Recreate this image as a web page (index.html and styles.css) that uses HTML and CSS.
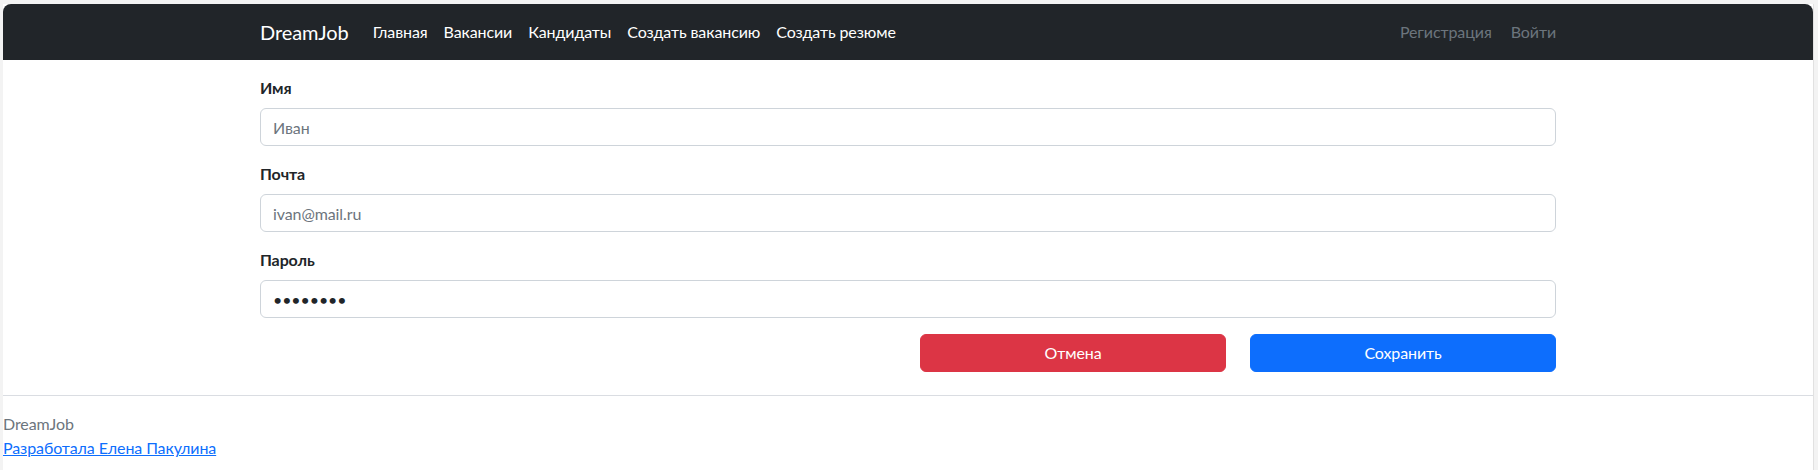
FILE: index.html
```html
<!DOCTYPE html>
<html lang="ru">
<head>
<meta charset="utf-8">
<title>DreamJob — Регистрация</title>
<link rel="stylesheet" href="styles.css">
</head>
<body>
<div class="page">
  <nav class="navbar">
    <div class="container nav-inner">
      <a class="brand" href="#">DreamJob</a>
      <ul class="nav-left">
        <li><a class="nav-link" href="#">Главная</a></li>
        <li><a class="nav-link" href="#">Вакансии</a></li>
        <li><a class="nav-link" href="#">Кандидаты</a></li>
        <li><a class="nav-link" href="#">Создать вакансию</a></li>
        <li><a class="nav-link" href="#">Создать резюме</a></li>
      </ul>
      <div class="nav-right">
        <a class="nav-link muted" href="#">Регистрация</a>
        <a class="nav-link muted" href="#">Войти</a>
      </div>
    </div>
  </nav>

  <main class="container form-wrap">
    <form class="reg-form">
      <div class="field">
        <label class="field-label" for="name">Имя</label>
        <input class="form-control" id="name" type="text" placeholder="Иван">
      </div>
      <div class="field">
        <label class="field-label" for="email">Почта</label>
        <input class="form-control" id="email" type="email" placeholder="ivan@mail.ru">
      </div>
      <div class="field">
        <label class="field-label" for="password">Пароль</label>
        <input class="form-control" id="password" type="password" value="12345678">
      </div>
      <div class="actions">
        <button type="button" class="btn btn-danger">Отмена</button>
        <button type="submit" class="btn btn-primary">Сохранить</button>
      </div>
    </form>
  </main>

  <footer class="footer">
    <hr class="divider">
    <div class="footer-brand">DreamJob</div>
    <a class="footer-link" href="#">Разработала Елена Пакулина</a>
  </footer>
</div>
</body>
</html>
```

FILE: styles.css
```css
* { box-sizing: border-box; }

html, body {
  margin: 0;
  height: 100%;
}

body {
  background: #f3f3f3;
  padding: 4px 4px 0 3px;
  font-family: "Segoe UI", Lato, Roboto, "Noto Sans", sans-serif;
  font-size: 16px;
  line-height: 1.5;
  letter-spacing: -0.1px;
  color: #212529;
}

.page {
  background: #fff;
  border-right: 1px solid #e1e1e1;
  min-height: 100%;
}

.container {
  max-width: 1320px;
  margin: 0 auto;
  padding: 0 12px;
}

/* Navbar */
.navbar {
  background: #212529;
  border-radius: 8px 8px 0 0;
  padding: 8px 0;
}

.nav-inner {
  display: flex;
  align-items: center;
}

.brand {
  color: #fff;
  font-size: 20px;
  line-height: 30px;
  padding: 5px 0;
  margin-right: 16px;
  text-decoration: none;
}

.nav-left {
  list-style: none;
  margin: 0;
  padding: 0;
  display: flex;
}

.nav-link {
  display: block;
  color: #fff;
  text-decoration: none;
  padding: 8px;
  line-height: 24px;
}

.nav-right {
  margin-left: auto;
  display: flex;
  gap: 3px;
}

.nav-right .nav-link:last-child {
  padding-right: 0;
}

.nav-link.muted {
  color: #6c757d;
}

/* Form */
.form-wrap {
  padding-top: 16px;
}

.field {
  margin-bottom: 16px;
}

.field-label {
  display: block;
  font-weight: 700;
  margin-bottom: 8px;
  line-height: 24px;
}

.form-control {
  display: block;
  width: 100%;
  height: 38px;
  padding: 6px 12px;
  font: inherit;
  letter-spacing: inherit;
  color: #212529;
  background: #fff;
  border: 1px solid #ced4da;
  border-radius: 6px;
  outline: none;
}

.form-control::placeholder {
  color: #6c757d;
}

.actions {
  display: flex;
  justify-content: flex-end;
  gap: 24px;
}

.btn {
  width: 306px;
  height: 38px;
  border: 1px solid transparent;
  border-radius: 6px;
  font: inherit;
  letter-spacing: inherit;
  color: #fff;
  padding: 6px 12px;
  cursor: pointer;
}

.btn-danger {
  background: #dc3545;
  border-color: #dc3545;
}

.btn-primary {
  background: #0d6efd;
  border-color: #0d6efd;
}

/* Footer */
.footer {
  padding-top: 23px;
}

.divider {
  margin: 0 0 16px;
  border: 0;
  border-top: 1px solid #dadde2;
}

.footer-brand {
  color: #6c757d;
}

.footer-link {
  color: #0d6efd;
  text-decoration: underline;
}
```
